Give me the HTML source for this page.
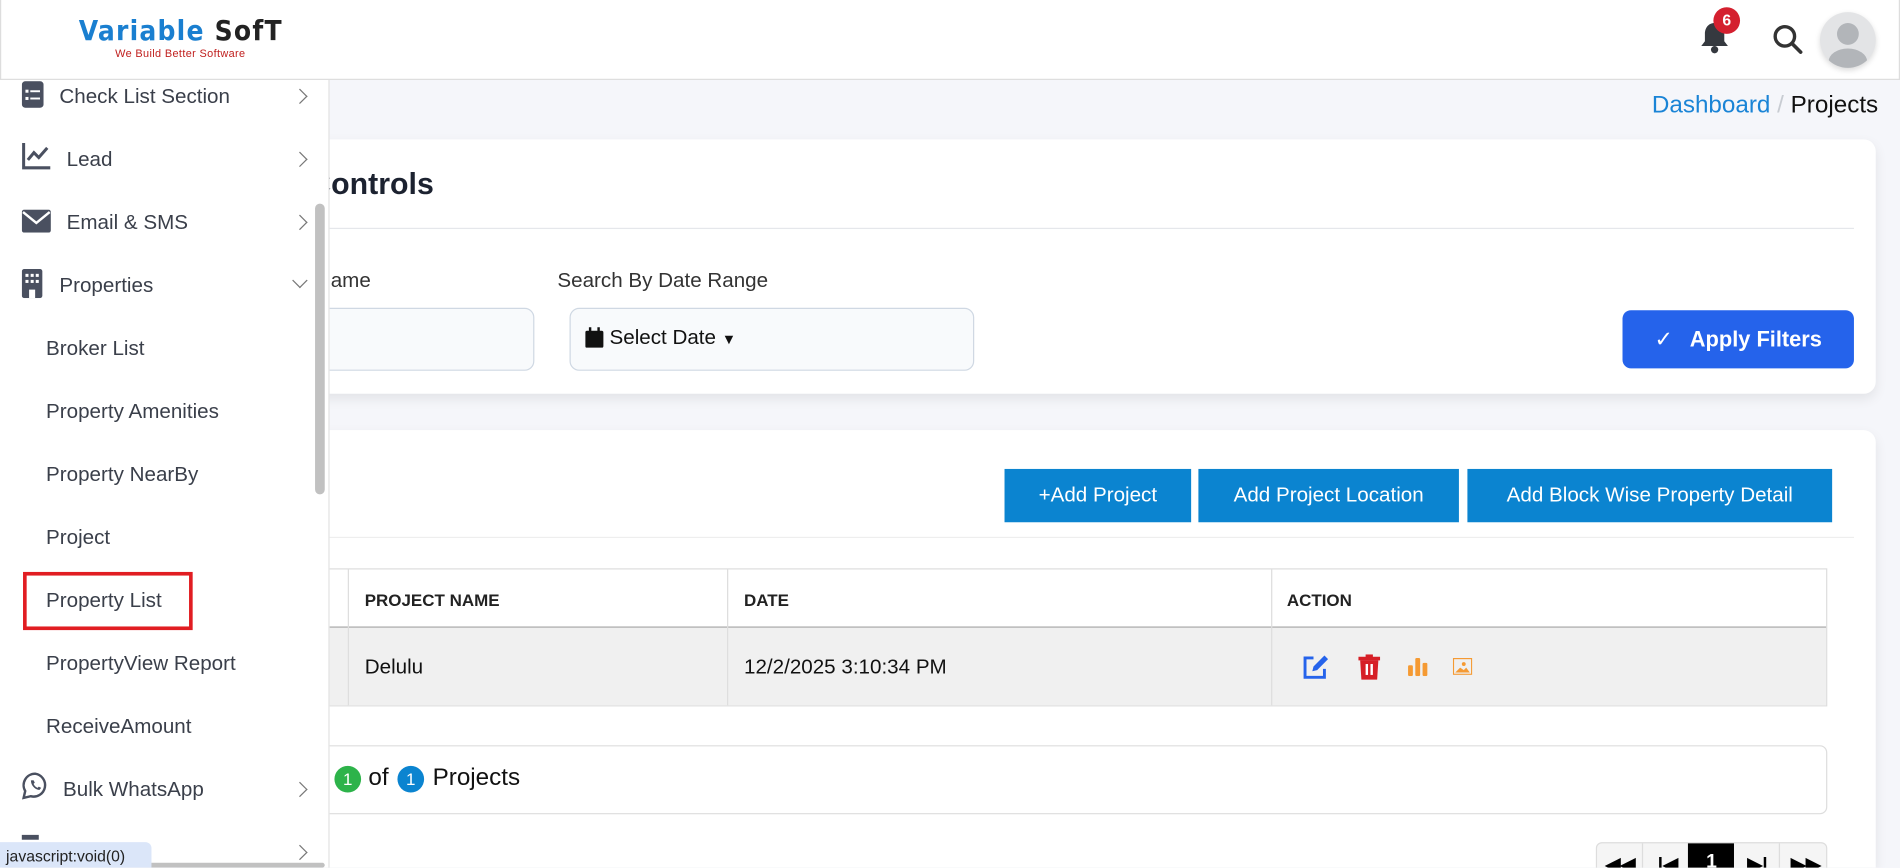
<!DOCTYPE html>
<html><head><meta charset="utf-8"><style>
html,body{margin:0;padding:0;width:1900px;height:868px;overflow:hidden;background:#f5f6fa;font-family:"Liberation Sans",sans-serif;}
#w{position:absolute;left:0;top:0;width:1568px;height:716px;transform:scale(1.21173);transform-origin:0 0;background:#f5f6fa;overflow:hidden;}
.a{position:absolute;}
.card{position:absolute;background:#fff;border-radius:10px;box-shadow:0 4px 10px rgba(0,0,0,.08);}
.btn{position:absolute;background:#0b84d0;color:#fff;font-size:17px;display:flex;align-items:center;justify-content:center;top:387px;height:44px;}
.sub{position:absolute;left:38px;font-size:17px;color:#3a3f4a;line-height:20px;}
.chev{position:absolute;left:243px;width:8px;height:8px;border-right:1.6px solid #777;border-bottom:1.6px solid #777;transform:rotate(-45deg);}
</style></head><body><div id="w">

<!-- header -->
<div class="a" style="left:0;top:0;width:1566px;height:65px;background:#fff;border:1px solid #ddd;border-top:none;"></div>
<div class="a" style="left:65px;top:13px;font-size:23px;font-weight:bold;letter-spacing:1px;font-family:'DejaVu Sans Condensed','Liberation Sans',sans-serif;"><span style="color:#1a7fd0">Variable</span> <span style="color:#222">SofT</span></div>
<div class="a" style="left:95px;top:39px;font-size:9px;color:#c0201f;letter-spacing:.3px;">We Build Better Software</div>
<svg class="a" style="left:1403px;top:17px" width="24" height="28" viewBox="0 0 24 28"><path d="M12 2c-5 0-8 4-8 9v6l-3 4h22l-3-4v-6c0-5-3-9-8-9z" fill="#35393f"/><circle cx="12" cy="24" r="3" fill="#35393f"/></svg>
<div class="a" style="left:1414px;top:6px;width:22px;height:22px;border-radius:50%;background:#d4202f;color:#fff;font-size:13px;font-weight:bold;text-align:center;line-height:22px;">6</div>
<svg class="a" style="left:1462px;top:19px" width="28" height="28" viewBox="0 0 28 28"><circle cx="11" cy="11" r="8" fill="none" stroke="#333" stroke-width="2.8"/><path d="M17 17l7 7" stroke="#333" stroke-width="3" stroke-linecap="round"/></svg>
<div class="a" style="left:1502px;top:10px;width:46px;height:46px;border-radius:50%;background:#e3e4e6;box-shadow:0 2px 5px rgba(0,0,0,.15);overflow:hidden;">
<div class="a" style="left:14px;top:9px;width:18px;height:18px;border-radius:50%;background:#b2b5b9"></div>
<div class="a" style="left:7px;top:30px;width:32px;height:22px;border-radius:50% 50% 0 0;background:#b2b5b9"></div></div>

<!-- breadcrumb -->
<div class="a" style="right:18px;top:76px;font-size:20px;"><span style="color:#1a84d6">Dashboard</span> <span style="color:#c8ccd2">/</span> <span style="color:#111">Projects</span></div>

<!-- card 1 -->
<div class="card" style="left:150px;top:115px;width:1398px;height:210px;"></div>
<div class="a" style="right:1210px;top:138px;font-size:25px;font-weight:bold;color:#1c2230;">Filter Controls</div>
<div class="a" style="left:200px;top:188px;width:1330px;height:1px;background:#e5e7eb"></div>
<div class="a" style="right:1262px;top:222px;font-size:17px;color:#333;">Search By Name</div>
<div class="a" style="left:460px;top:222px;font-size:17px;color:#333;">Search By Date Range</div>
<div class="a" style="left:150px;top:254px;width:289px;height:50px;border:1px solid #cfd8e3;border-radius:8px;background:#f8fafc;"></div>
<div class="a" style="left:470px;top:254px;width:332px;height:50px;border:1px solid #cfd8e3;border-radius:8px;background:#f8fafc;"></div>
<svg class="a" style="left:483px;top:270px" width="15" height="17" viewBox="0 0 15 17"><rect x="0" y="3" width="15" height="14" rx="1.5" fill="#111"/><rect x="3" y="0" width="2" height="4" fill="#111"/><rect x="10" y="0" width="2" height="4" fill="#111"/></svg>
<div class="a" style="left:503px;top:269px;font-size:17px;color:#111;">Select Date <span style="font-size:12px">&#9660;</span></div>
<div class="a" style="left:1339px;top:256px;width:191px;height:48px;border-radius:7px;background:#2563eb;color:#fff;font-size:18px;font-weight:bold;display:flex;align-items:center;justify-content:center;"><span style="font-weight:normal;margin-right:14px">&#10003;</span>Apply Filters</div>

<!-- card 2 -->
<div class="card" style="left:150px;top:355px;width:1398px;height:361px;border-radius:10px 10px 0 0;"></div>
<div class="btn" style="left:829px;width:154px;">+Add Project</div>
<div class="btn" style="left:989px;width:215px;">Add Project Location</div>
<div class="btn" style="left:1211px;width:301px;">Add Block Wise Property Detail</div>
<div class="a" style="left:200px;top:443px;width:1330px;height:1px;background:#eee"></div>

<div class="a" style="left:200px;top:469px;width:1306px;height:112px;border:1px solid #ddd;"></div>
<div class="a" style="left:201px;top:517px;width:1306px;height:64px;background:#f0f0f0;border-top:1px solid #aaa;"></div>
<div class="a" style="left:287px;top:470px;width:1px;height:112px;background:#ddd"></div>
<div class="a" style="left:600px;top:470px;width:1px;height:112px;background:#ddd"></div>
<div class="a" style="left:1049px;top:470px;width:1px;height:112px;background:#ddd"></div>
<div class="a" style="left:301px;top:487px;font-size:14px;font-weight:bold;color:#222;">PROJECT NAME</div>
<div class="a" style="left:614px;top:487px;font-size:14px;font-weight:bold;color:#222;">DATE</div>
<div class="a" style="left:1062px;top:487px;font-size:14px;font-weight:bold;color:#222;">ACTION</div>
<div class="a" style="left:301px;top:541px;font-size:17px;color:#111;">Delulu</div>
<div class="a" style="left:614px;top:541px;font-size:17px;color:#111;">12/2/2025 3:10:34 PM</div>
<svg class="a" style="left:1075px;top:540px" width="22" height="21" viewBox="0 0 22 21"><path d="M9 3H2v16h16v-7" fill="none" stroke="#2563eb" stroke-width="2.4"/><path d="M8 14l1-4 9-9 3 3-9 9z" fill="#2563eb"/></svg>
<svg class="a" style="left:1121px;top:540px" width="18" height="21" viewBox="0 0 18 21"><rect x="0" y="2" width="18" height="3" fill="#d61f26"/><rect x="6" y="0" width="6" height="3" fill="#d61f26"/><path d="M1.5 5h15l-1 16h-13z" fill="#d61f26"/><rect x="6" y="8" width="2" height="9" fill="#fff"/><rect x="10" y="8" width="2" height="9" fill="#fff"/></svg>
<svg class="a" style="left:1162px;top:542px" width="16" height="16" viewBox="0 0 16 16"><rect x="0" y="7" width="4" height="9" rx="1" fill="#f59a33"/><rect x="6" y="1" width="4" height="15" rx="1" fill="#f59a33"/><rect x="12" y="5" width="4" height="11" rx="1" fill="#f59a33"/></svg>
<svg class="a" style="left:1199px;top:543px" width="16" height="14" viewBox="0 0 16 14"><rect x=".5" y=".5" width="15" height="13" fill="none" stroke="#f59a33"/><path d="M2 12l4-4 3 2 2-2 3 4z" fill="#f59a33"/><circle cx="9" cy="5" r="1.6" fill="#f59a33"/></svg>

<div class="a" style="left:200px;top:615px;width:1306px;height:55px;border:1px solid #ddd;border-radius:6px;"></div>
<div class="a" style="left:276px;top:632px;width:22px;height:22px;border-radius:50%;background:#2db34a;color:#fff;font-size:14px;text-align:center;line-height:22px;">1</div>
<div class="a" style="left:304px;top:631px;font-size:20px;color:#111;">of</div>
<div class="a" style="left:328px;top:632px;width:22px;height:22px;border-radius:50%;background:#0b84d0;color:#fff;font-size:14px;text-align:center;line-height:22px;">1</div>
<div class="a" style="left:357px;top:631px;font-size:20px;color:#111;">Projects</div>

<div class="a" style="left:1317px;top:695px;width:189px;height:30px;border:1px solid #ddd;border-radius:5px;background:#f5f5f5;"></div>
<div class="a" style="left:1355px;top:696px;width:1px;height:30px;background:#ddd"></div>
<div class="a" style="left:1393px;top:696px;width:38px;height:30px;background:#000"></div>
<div class="a" style="left:1468px;top:696px;width:1px;height:30px;background:#ddd"></div>
<div class="a" style="left:1325px;top:704px;font-size:16px;font-weight:bold;">&#9664;&#9664;</div>
<div class="a" style="left:1368px;top:704px;font-size:16px;font-weight:bold;">|&#9664;</div>
<div class="a" style="left:1408px;top:703px;font-size:16px;font-weight:bold;color:#fff;">1</div>
<div class="a" style="left:1442px;top:704px;font-size:16px;font-weight:bold;">&#9654;|</div>
<div class="a" style="left:1478px;top:704px;font-size:16px;font-weight:bold;">&#9654;&#9654;</div>

<!-- sidebar -->
<div class="a" style="left:0;top:66px;width:271px;height:650px;background:#fff;border-right:1px solid #e2e2e2;"></div>
<svg class="a" style="left:18px;top:67px" width="18" height="22" viewBox="0 0 18 22"><rect x="0" y="0" width="18" height="22" rx="3" fill="#4a5060"/><rect x="3" y="7" width="2.5" height="2.5" fill="#fff"/><rect x="7" y="7.5" width="8" height="1.6" fill="#fff"/><rect x="3" y="13" width="2.5" height="2.5" fill="#fff"/><rect x="7" y="13.5" width="8" height="1.6" fill="#fff"/></svg>
<div class="a" style="left:49px;top:70px;font-size:17px;color:#3a3f4a;">Check List Section</div><div class="chev" style="top:75px"></div>
<svg class="a" style="left:18px;top:118px" width="24" height="22" viewBox="0 0 24 22"><path d="M1.5 0v20.5h22" fill="none" stroke="#4a5060" stroke-width="2.5"/><path d="M5 14l5-6 4 4 7-8" fill="none" stroke="#4a5060" stroke-width="2.5"/></svg>
<div class="a" style="left:55px;top:122px;font-size:17px;color:#3a3f4a;">Lead</div><div class="chev" style="top:127px"></div>
<svg class="a" style="left:18px;top:173px" width="24" height="19" viewBox="0 0 24 19"><rect width="24" height="19" rx="2" fill="#4a5060"/><path d="M1 2l11 9 11-9" fill="none" stroke="#fff" stroke-width="2"/></svg>
<div class="a" style="left:55px;top:174px;font-size:17px;color:#3a3f4a;">Email &amp; SMS</div><div class="chev" style="top:179px"></div>
<svg class="a" style="left:18px;top:222px" width="17" height="24" viewBox="0 0 17 24"><rect width="17" height="24" rx="2" fill="#4a5060"/><g fill="#fff"><rect x="3" y="4" width="2.5" height="2.5"/><rect x="7.3" y="4" width="2.5" height="2.5"/><rect x="11.5" y="4" width="2.5" height="2.5"/><rect x="3" y="9" width="2.5" height="2.5"/><rect x="7.3" y="9" width="2.5" height="2.5"/><rect x="11.5" y="9" width="2.5" height="2.5"/><rect x="6" y="17" width="5" height="7"/></g></svg>
<div class="a" style="left:49px;top:226px;font-size:17px;color:#3a3f4a;">Properties</div>
<div class="a" style="left:243px;top:227px;width:8px;height:8px;border-right:1.6px solid #777;border-bottom:1.6px solid #777;transform:rotate(45deg);"></div>
<div class="sub" style="top:278px">Broker List</div>
<div class="sub" style="top:330px">Property Amenities</div>
<div class="sub" style="top:382px">Property NearBy</div>
<div class="sub" style="top:434px">Project</div>
<div class="a" style="left:19px;top:472px;width:134px;height:42px;border:3.5px solid #e11d22;"></div>
<div class="sub" style="top:486px">Property List</div>
<div class="sub" style="top:538px">PropertyView Report</div>
<div class="sub" style="top:590px">ReceiveAmount</div>
<svg class="a" style="left:18px;top:637px" width="22" height="23" viewBox="0 0 22 23"><path d="M11 1.5a9.5 9.5 0 0 0-8.2 14.3L1.5 21.5l5.8-1.4A9.5 9.5 0 1 0 11 1.5z" fill="none" stroke="#4a5060" stroke-width="2"/><path d="M7.5 7c0 4 3 7.5 7 8l1.5-1.8-2-1-1 1c-1.5-.6-2.8-2-3.3-3.3l1-1-1-2z" fill="#4a5060"/></svg>
<div class="a" style="left:52px;top:642px;font-size:17px;color:#3a3f4a;">Bulk WhatsApp</div><div class="chev" style="top:647px"></div>
<div class="a" style="left:18px;top:689px;width:14px;height:4px;background:#4a5060"></div>
<div class="chev" style="top:699px"></div>
<div class="a" style="left:260px;top:168px;width:8px;height:240px;border-radius:4px;background:#c1c1c1"></div>
<div class="a" style="left:0;top:712px;width:268px;height:4px;border-radius:2px;background:#c1c1c1"></div>
<div class="a" style="left:0;top:695px;width:125px;height:21px;background:#dbe6f9;border-radius:0 5px 0 0;font-size:13px;color:#222;line-height:24px;padding-left:5px;box-sizing:border-box;">javascript:void(0)</div>

</div></body></html>
